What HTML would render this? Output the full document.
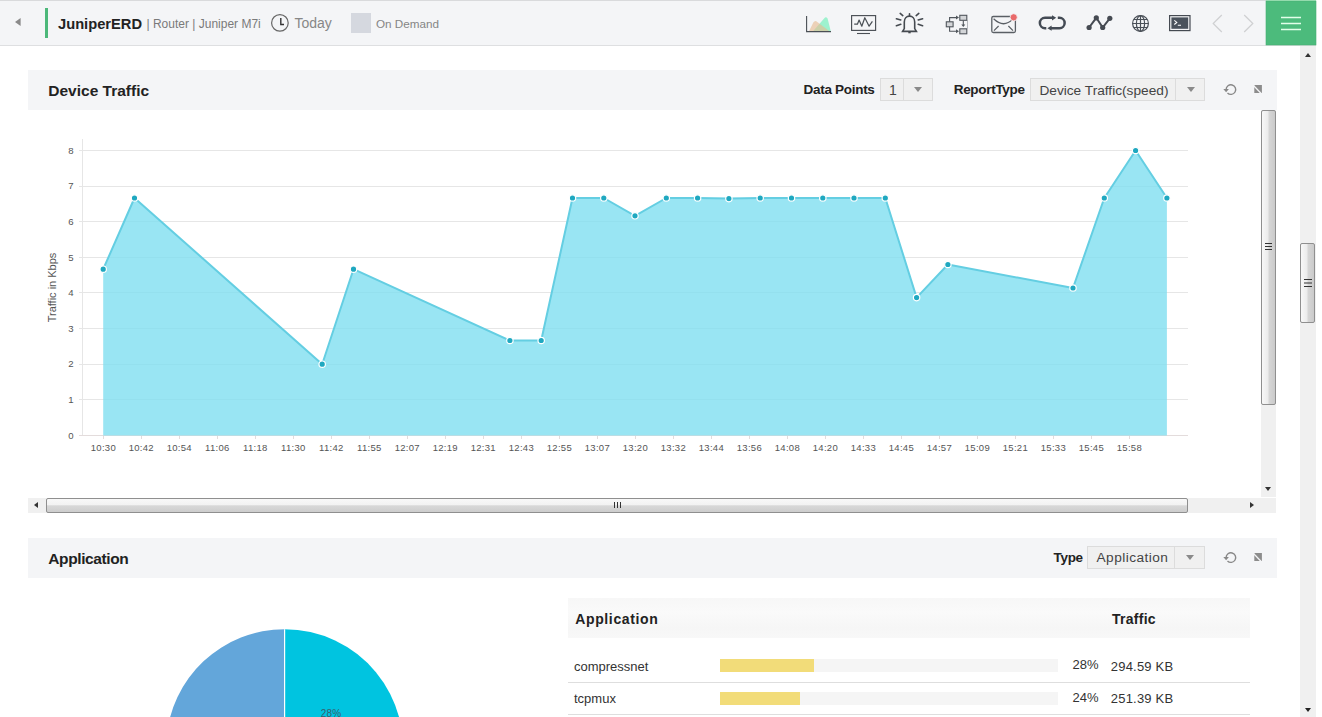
<!DOCTYPE html>
<html><head><meta charset="utf-8">
<style>
*{margin:0;padding:0;box-sizing:border-box}
html,body{width:1322px;height:717px;overflow:hidden;background:#fff;font-family:"Liberation Sans",sans-serif;color:#222}
.a{position:absolute}
.chart{position:absolute;left:0;top:0}
#top{position:absolute;left:0;top:0;width:1316px;height:46px;background:#f4f5f7;border-top:1px solid #d9dadc;border-bottom:1px solid #dedfe1}
.t{position:absolute;white-space:nowrap;line-height:1}
.ph{position:absolute;left:28px;width:1249px;height:40px;background:#f4f5f7}
.sel{position:absolute;height:23px;background:#f0f0f0;border:1px solid #dcdcdc}
.sel .dv{position:absolute;top:0;bottom:0;width:1px;background:#dcdcdc}
.caret{position:absolute;width:0;height:0;border-left:4px solid transparent;border-right:4px solid transparent;border-top:5px solid #8a8a8a}
.sb{position:absolute;background:#f0f0f0}
.thumbv{position:absolute;border:1px solid #8f8f8f;border-radius:2px;background:linear-gradient(90deg,#f8f8f8,#ececec 45%,#d6d6d6 55%,#cacaca)}
.thumbh{position:absolute;border:1px solid #8f8f8f;border-radius:2px;background:linear-gradient(180deg,#f8f8f8,#f2f2f2 45%,#d8d8d8 52%,#cdcdcd)}
</style></head><body>
<div id="top"></div>
<svg class="a" style="left:0;top:0" width="1322" height="50" viewBox="0 0 1322 50">
<polygon points="20.6,18 15,22 20.6,26" fill="#8a8a8a"/>
<rect x="45" y="8" width="3" height="30" fill="#4cb87a"/>
<!-- area chart icon -->
<path d="M813,31.2 L824.3,18.2 Q826,16.2 827.6,18.6 L830.8,31.2 Z" fill="#9ef2cf"/>
<path d="M809,31.2 L813.3,22.6 Q815,20 817.3,21.9 L829.5,31.2 Z" fill="#e6bb92" fill-opacity="0.62"/>
<path d="M806.6,16 V31.6 H831" fill="none" stroke="#4a4f55" stroke-width="1.1"/>
<!-- monitor -->
<rect x="851.6" y="15.6" width="24" height="14.8" fill="none" stroke="#4a4f55" stroke-width="1.15"/>
<path d="M857,33.5 H870" stroke="#4a4f55" stroke-width="1.1"/>
<path d="M854.2,24.2 H857.4 L859.1,20.1 L861.8,26.2 L864.8,17.7 L869.1,26.2 L872.4,21.3" fill="none" stroke="#4a4f55" stroke-width="1.2" stroke-linejoin="round"/>
<!-- bell -->
<g fill="none" stroke="#454a50" stroke-width="1.6" stroke-linecap="round">
<path d="M902.6,31.4 L904.3,28.6 V22 C904.3,18.4 906.5,16.1 909.5,16.1 C912.5,16.1 914.7,18.4 914.7,22 V28.6 L916.4,31.4 Z"/>
<path d="M909.5,13.8 V16"/>
<path d="M900.2,13.4 L902.8,15.6 M896.4,18.7 L900.8,19.9 M896.4,25.7 L900.8,24.3 M918.8,13.4 L916.2,15.6 M922.6,18.7 L918.2,19.9 M922.6,25.7 L918.2,24.3"/>
</g>
<rect x="908.3" y="31.5" width="2.4" height="1.8" fill="#454a50"/>
<!-- workflow -->
<g stroke="#50565c" stroke-width="1.1" fill="#d3d5d8">
<rect x="946.3" y="21.8" width="6.8" height="5"/>
<rect x="959.8" y="15.3" width="7" height="5"/>
<rect x="959.8" y="28.8" width="7" height="5"/>
</g>
<g stroke="#50565c" stroke-width="1.1" fill="none">
<path d="M949.6,21.8 V17.6 H956.5"/>
<path d="M949.6,26.8 V31.2 H956.5"/>
<path d="M963.3,20.6 V25"/>
<path d="M967.5,20 V28.5" stroke="#9a9ea3" stroke-width="0.7"/>
</g>
<g fill="#50565c">
<polygon points="956,15.6 959,17.6 956,19.6"/>
<polygon points="956,29.2 959,31.2 956,33.2"/>
<polygon points="961.3,24.5 965.3,24.5 963.3,27"/>
</g>
<!-- envelope -->
<rect x="991.8" y="16.5" width="23.6" height="16" rx="1.5" fill="none" stroke="#5a5f65" stroke-width="1.3"/>
<path d="M993.6,18.8 Q1003.5,28.5 1012.8,19.2 M994,30.6 L998.6,26 M1013,30.6 L1008.4,26" fill="none" stroke="#5a5f65" stroke-width="1.2"/>
<circle cx="1013.7" cy="17.3" r="3.6" fill="#e96a6a" stroke="#f4f5f7" stroke-width="0.8"/>
<!-- loop -->
<g fill="none" stroke="#444b55" stroke-width="2.5">
<path d="M1046.3,28.15 H1045 A5.15,5.15 0 0 1 1045,17.85 H1052.5"/>
<path d="M1057.8,17.85 H1059.5 A5.15,5.15 0 0 1 1059.5,28.15 H1051"/>
</g>
<g fill="#444b55">
<polygon points="1052,15.3 1056.2,17.85 1052,20.4"/>
<polygon points="1051.6,25.6 1047.4,28.15 1051.6,30.7"/>
</g>
<!-- line chart -->
<polyline points="1089.1,27.5 1096.3,17.8 1102.7,27.5 1109.8,18.3" fill="none" stroke="#454a52" stroke-width="2"/>
<g fill="#454a52"><circle cx="1089.1" cy="27.5" r="2.6"/><circle cx="1096.3" cy="17.8" r="2.6"/><circle cx="1102.7" cy="27.5" r="2.6"/><circle cx="1109.8" cy="18.3" r="2.6"/></g>
<!-- globe -->
<g fill="none" stroke="#4a5058" stroke-width="1.2">
<circle cx="1140.5" cy="23.5" r="7.9"/>
<ellipse cx="1140.5" cy="23.5" rx="4.1" ry="7.9"/>
<path d="M1140.5,15.6 V31.4 M1133.9,19.5 H1147.1 M1132.6,23.5 H1148.4 M1133.9,27.5 H1147.1"/>
</g>
<!-- terminal -->
<rect x="1169.6" y="15.6" width="20.4" height="15" fill="none" stroke="#454a52" stroke-width="1.2"/>
<rect x="1171.4" y="17.4" width="16.8" height="11.4" fill="#4a525c"/>
<path d="M1174.3,20.3 L1176.8,22.4 L1174.3,24.5 M1177.8,25.2 H1181" fill="none" stroke="#fff" stroke-width="1.1"/>
<!-- chevrons -->
<path d="M1221.8,15 L1213.2,23.5 L1221.8,32 M1244.2,15 L1252.8,23.5 L1244.2,32" fill="none" stroke="#cfd0d2" stroke-width="1.2"/>
<rect x="1266" y="0" width="50" height="1" fill="#b6efc6"/><rect x="1266" y="1" width="50" height="44" fill="#4cbb7c"/><rect x="1266" y="1" width="50" height="44" fill="none" stroke="#48ad74" stroke-width="0.6"/>
<path d="M1281,17.5 H1301 M1281,23.5 H1301 M1281,29.5 H1301" stroke="#e2ffe9" stroke-width="1.4"/>
</svg>
<div class="t" style="left:58px;top:16.6px;font-size:14.7px;font-weight:bold;color:#222">JuniperERD</div>
<div class="t" style="left:146.5px;top:17.6px;font-size:12px;color:#7a7a7a">| Router | Juniper M7i</div>
<svg class="a" style="left:270px;top:13px" width="20" height="20" viewBox="0 0 20 20"><circle cx="9.9" cy="9.9" r="8.3" fill="none" stroke="#666" stroke-width="1.2"/><path d="M10.8,5 V11.5 H14" fill="none" stroke="#333" stroke-width="1.4"/></svg>
<div class="t" style="left:294.4px;top:16px;font-size:14px;color:#878787">Today</div>
<div class="a" style="left:351px;top:13px;width:20px;height:20px;background:#d5d8df"></div>
<div class="t" style="left:376px;top:17.8px;font-size:11.7px;color:#858585">On Demand</div>
<svg class="chart" width="1322" height="717" viewBox="0 0 1322 717">
<g stroke="#e6e6e6" stroke-width="1" shape-rendering="crispEdges"><line x1="79" y1="399.5" x2="1188" y2="399.5"/><line x1="79" y1="364.5" x2="1188" y2="364.5"/><line x1="79" y1="328.5" x2="1188" y2="328.5"/><line x1="79" y1="292.5" x2="1188" y2="292.5"/><line x1="79" y1="257.5" x2="1188" y2="257.5"/><line x1="79" y1="221.5" x2="1188" y2="221.5"/><line x1="79" y1="186.5" x2="1188" y2="186.5"/><line x1="79" y1="150.5" x2="1188" y2="150.5"/></g>
<line x1="82.5" y1="139" x2="82.5" y2="436" stroke="#e6e6e6" shape-rendering="crispEdges"/>
<line x1="79" y1="435.5" x2="1188" y2="435.5" stroke="#e3dcdc" shape-rendering="crispEdges"/>
<g stroke="#e3dcdc" shape-rendering="crispEdges"><line x1="103.5" y1="435" x2="103.5" y2="439"/><line x1="141.5" y1="435" x2="141.5" y2="439"/><line x1="179.5" y1="435" x2="179.5" y2="439"/><line x1="217.5" y1="435" x2="217.5" y2="439"/><line x1="255.5" y1="435" x2="255.5" y2="439"/><line x1="293.5" y1="435" x2="293.5" y2="439"/><line x1="331.5" y1="435" x2="331.5" y2="439"/><line x1="369.5" y1="435" x2="369.5" y2="439"/><line x1="407.5" y1="435" x2="407.5" y2="439"/><line x1="445.5" y1="435" x2="445.5" y2="439"/><line x1="483.5" y1="435" x2="483.5" y2="439"/><line x1="521.5" y1="435" x2="521.5" y2="439"/><line x1="559.5" y1="435" x2="559.5" y2="439"/><line x1="597.5" y1="435" x2="597.5" y2="439"/><line x1="635.5" y1="435" x2="635.5" y2="439"/><line x1="673.5" y1="435" x2="673.5" y2="439"/><line x1="711.5" y1="435" x2="711.5" y2="439"/><line x1="749.5" y1="435" x2="749.5" y2="439"/><line x1="787.5" y1="435" x2="787.5" y2="439"/><line x1="825.5" y1="435" x2="825.5" y2="439"/><line x1="863.5" y1="435" x2="863.5" y2="439"/><line x1="901.5" y1="435" x2="901.5" y2="439"/><line x1="939.5" y1="435" x2="939.5" y2="439"/><line x1="977.5" y1="435" x2="977.5" y2="439"/><line x1="1015.5" y1="435" x2="1015.5" y2="439"/><line x1="1053.5" y1="435" x2="1053.5" y2="439"/><line x1="1091.5" y1="435" x2="1091.5" y2="439"/><line x1="1129.5" y1="435" x2="1129.5" y2="439"/></g>
<polygon points="103.2,435.5 103.2,269.2 134.5,198.0 322.2,364.2 353.5,269.2 509.9,340.5 541.2,340.5 572.5,198.0 603.8,198.0 635.0,215.8 666.3,198.0 697.6,198.0 728.9,198.6 760.2,198.0 791.5,198.0 822.8,198.0 854.0,198.0 885.3,198.0 916.6,297.6 947.9,264.5 1073.0,288.0 1104.3,198.0 1135.6,150.5 1166.9,198.0 1166.9,435.5" fill="#7fdff0" fill-opacity="0.8"/>
<polyline points="103.2,269.2 134.5,198.0 322.2,364.2 353.5,269.2 509.9,340.5 541.2,340.5 572.5,198.0 603.8,198.0 635.0,215.8 666.3,198.0 697.6,198.0 728.9,198.6 760.2,198.0 791.5,198.0 822.8,198.0 854.0,198.0 885.3,198.0 916.6,297.6 947.9,264.5 1073.0,288.0 1104.3,198.0 1135.6,150.5 1166.9,198.0" fill="none" stroke="#64cee2" stroke-width="2" stroke-linejoin="round"/>
<g fill="#1fa8c0" stroke="#fff" stroke-width="1.2"><circle cx="103.2" cy="269.2" r="3.2"/><circle cx="134.5" cy="198.0" r="3.2"/><circle cx="322.2" cy="364.2" r="3.2"/><circle cx="353.5" cy="269.2" r="3.2"/><circle cx="509.9" cy="340.5" r="3.2"/><circle cx="541.2" cy="340.5" r="3.2"/><circle cx="572.5" cy="198.0" r="3.2"/><circle cx="603.8" cy="198.0" r="3.2"/><circle cx="635.0" cy="215.8" r="3.2"/><circle cx="666.3" cy="198.0" r="3.2"/><circle cx="697.6" cy="198.0" r="3.2"/><circle cx="728.9" cy="198.6" r="3.2"/><circle cx="760.2" cy="198.0" r="3.2"/><circle cx="791.5" cy="198.0" r="3.2"/><circle cx="822.8" cy="198.0" r="3.2"/><circle cx="854.0" cy="198.0" r="3.2"/><circle cx="885.3" cy="198.0" r="3.2"/><circle cx="916.6" cy="297.6" r="3.2"/><circle cx="947.9" cy="264.5" r="3.2"/><circle cx="1073.0" cy="288.0" r="3.2"/><circle cx="1104.3" cy="198.0" r="3.2"/><circle cx="1135.6" cy="150.5" r="3.2"/><circle cx="1166.9" cy="198.0" r="3.2"/></g>
<g font-family="Liberation Sans" font-size="9.6" fill="#555" text-anchor="end"><text x="73.6" y="438.7">0</text><text x="73.6" y="403.1">1</text><text x="73.6" y="367.4">2</text><text x="73.6" y="331.8">3</text><text x="73.6" y="296.2">4</text><text x="73.6" y="260.6">5</text><text x="73.6" y="224.9">6</text><text x="73.6" y="189.3">7</text><text x="73.6" y="153.7">8</text></g>
<g font-family="Liberation Sans" font-size="9.5" letter-spacing="0.3" fill="#555" text-anchor="middle"><text x="103.4" y="451">10:30</text><text x="141.3" y="451">10:42</text><text x="179.3" y="451">10:54</text><text x="217.3" y="451">11:06</text><text x="255.3" y="451">11:18</text><text x="293.3" y="451">11:30</text><text x="331.3" y="451">11:42</text><text x="369.3" y="451">11:55</text><text x="407.3" y="451">12:07</text><text x="445.3" y="451">12:19</text><text x="483.3" y="451">12:31</text><text x="521.4" y="451">12:43</text><text x="559.4" y="451">12:55</text><text x="597.4" y="451">13:07</text><text x="635.4" y="451">13:20</text><text x="673.4" y="451">13:32</text><text x="711.4" y="451">13:44</text><text x="749.4" y="451">13:56</text><text x="787.4" y="451">14:08</text><text x="825.4" y="451">14:20</text><text x="863.4" y="451">14:33</text><text x="901.4" y="451">14:45</text><text x="939.4" y="451">14:57</text><text x="977.4" y="451">15:09</text><text x="1015.4" y="451">15:21</text><text x="1053.4" y="451">15:33</text><text x="1091.4" y="451">15:45</text><text x="1129.4" y="451">15:58</text></g>
<text transform="translate(55.6,287.5) rotate(-90)" text-anchor="middle" font-family="Liberation Sans" font-size="11" fill="#555">Traffic in Kbps</text>
</svg><!-- page scrollbar -->
<div class="sb" style="left:1300px;top:46px;width:16px;height:671px;background:#f0f0f0"></div>
<div class="a" style="left:1304.5px;top:53px;width:0;height:0;border-left:3.5px solid transparent;border-right:3.5px solid transparent;border-bottom:4px solid #333"></div>
<div class="thumbv" style="left:1300px;top:243px;width:15px;height:80px"></div>
<div class="a" style="left:1304px;top:278.5px;width:7.5px;height:1px;background:#333;box-shadow:0 3.5px 0 #333,0 7px 0 #333"></div>
<div class="a" style="left:1304.5px;top:707.6px;width:0;height:0;border-left:3.7px solid transparent;border-right:3.7px solid transparent;border-top:4.2px solid #222"></div>

<!-- panel 1 header -->
<div class="ph" style="top:70px"></div>
<div class="t" style="left:48.3px;top:82.7px;font-size:15.5px;font-weight:bold;color:#222">Device Traffic</div>
<div class="t" style="left:803.6px;top:82.5px;font-size:13.5px;font-weight:bold;letter-spacing:-0.3px;color:#222">Data Points</div>
<div class="sel" style="left:880px;top:78px;width:53px;height:23px"><div class="dv" style="left:22px"></div><div class="caret" style="left:33px;top:8px"></div></div>
<div class="t" style="left:889px;top:83px;font-size:14px;color:#444">1</div>
<div class="t" style="left:953.7px;top:82.5px;font-size:13.5px;font-weight:bold;letter-spacing:-0.3px;color:#222">ReportType</div>
<div class="sel" style="left:1030px;top:78px;width:175px;height:23px"><div class="dv" style="left:144px"></div><div class="caret" style="left:156px;top:8px"></div></div>
<div class="t" style="left:1039.4px;top:83.5px;font-size:13.7px;color:#444">Device Traffic(speed)</div>
<svg class="a" style="left:1222px;top:82px" width="16" height="16" viewBox="0 0 16 16"><path d="M4.1,7.6 A4.8,4.8 0 1 1 5.5,11" fill="none" stroke="#888" stroke-width="1.4"/><polygon points="1.3,7 6.9,7 4.1,10.2" fill="#888"/></svg>
<svg class="a" style="left:1254px;top:85px" width="9" height="9" viewBox="0 0 9 9"><rect x="0.3" y="0" width="7.6" height="8" fill="#8c8c8c"/><path d="M-0.5,0.6 L7.6,8.9" stroke="#f4f5f7" stroke-width="1.4"/></svg>

<!-- inner v scrollbar -->
<div class="sb" style="left:1261px;top:110px;width:15px;height:387px"></div>
<div class="thumbv" style="left:1261px;top:110px;width:15px;height:295px"></div>
<div class="a" style="left:1265px;top:243px;width:6.5px;height:1px;background:#333;box-shadow:0 3px 0 #333,0 6px 0 #333"></div>
<div class="a" style="left:1265px;top:487px;width:0;height:0;border-left:3.5px solid transparent;border-right:3.5px solid transparent;border-top:4px solid #333"></div>
<!-- h scrollbar -->
<div class="sb" style="left:28px;top:498px;width:1248px;height:15px"></div>
<div class="a" style="left:34px;top:502px;width:0;height:0;border-top:3.5px solid transparent;border-bottom:3.5px solid transparent;border-right:4px solid #333"></div>
<div class="thumbh" style="left:46px;top:498px;width:1142px;height:15px"></div>
<div class="a" style="left:613.5px;top:502px;width:1px;height:6px;background:#333;box-shadow:3px 0 0 #333,6px 0 0 #333"></div>
<div class="a" style="left:1250px;top:502px;width:0;height:0;border-top:3.5px solid transparent;border-bottom:3.5px solid transparent;border-left:4px solid #333"></div>

<!-- panel 2 header -->
<div class="ph" style="top:538px"></div>
<div class="t" style="left:48.3px;top:550.8px;font-size:15.5px;font-weight:bold;letter-spacing:-0.4px;color:#222">Application</div>
<div class="t" style="left:1053.5px;top:550.5px;font-size:13.5px;font-weight:bold;letter-spacing:-0.3px;color:#222">Type</div>
<div class="sel" style="left:1087px;top:546px;width:118px;height:23px"><div class="dv" style="left:86px"></div><div class="caret" style="left:98px;top:8px"></div></div>
<div class="t" style="left:1096.5px;top:551px;font-size:13.7px;letter-spacing:0.45px;color:#444">Application</div>
<svg class="a" style="left:1222px;top:550px" width="16" height="16" viewBox="0 0 16 16"><path d="M4.1,7.6 A4.8,4.8 0 1 1 5.5,11" fill="none" stroke="#888" stroke-width="1.4"/><polygon points="1.3,7 6.9,7 4.1,10.2" fill="#888"/></svg>
<svg class="a" style="left:1254px;top:553px" width="9" height="9" viewBox="0 0 9 9"><rect x="0.3" y="0" width="7.6" height="8" fill="#8c8c8c"/><path d="M-0.5,0.6 L7.6,8.9" stroke="#f4f5f7" stroke-width="1.4"/></svg>

<!-- pie -->
<svg class="a" style="left:0;top:578px" width="560" height="139" viewBox="0 578 560 139">
<path d="M284.6,747.7 L284.6,629.2 A118.5,118.5 0 0 1 401.0,769.9 Z" fill="#00c4e0"/>
<path d="M284.6,747.7 L401.0,769.9 A118.5,118.5 0 1 1 284.6,629.2 Z" fill="#63a6da"/>
<line x1="284.6" y1="629.2" x2="284.6" y2="747.7" stroke="#fff" stroke-width="1.2"/>
<text x="331" y="716.5" font-family="Liberation Sans" font-size="10" letter-spacing="0.2" fill="#36606e" text-anchor="middle">28%</text>
</svg>
<!-- table -->
<div class="a" style="left:568px;top:598px;width:682px;height:40px;background:linear-gradient(#f7f7f7,#fafafa 35%,#f6f6f6 75%,#f8f8f8)"></div>
<div class="t" style="left:575.2px;top:612.2px;font-size:14px;font-weight:bold;letter-spacing:0.64px;color:#222">Application</div>
<div class="t" style="left:1112px;top:612.2px;font-size:14px;font-weight:bold;letter-spacing:0.27px;color:#222">Traffic</div>
<div class="t" style="left:574px;top:659.5px;font-size:13px;color:#333">compressnet</div>
<div class="a" style="left:720px;top:659px;width:338px;height:13px;background:#f5f5f5"></div>
<div class="a" style="left:720px;top:659px;width:94.3px;height:13px;background:#f2dc79"></div>
<div class="t" style="left:1072.5px;top:657.7px;font-size:13px;color:#333">28%</div>
<div class="t" style="left:1110.8px;top:659.8px;font-size:13px;letter-spacing:0.2px;color:#333">294.59 KB</div>
<div class="a" style="left:568px;top:682px;width:682px;height:1px;background:#dedede"></div>
<div class="t" style="left:574px;top:691.5px;font-size:13px;color:#333">tcpmux</div>
<div class="a" style="left:720px;top:692px;width:338px;height:13px;background:#f5f5f5"></div>
<div class="a" style="left:720px;top:692px;width:80.3px;height:13px;background:#f2dc79"></div>
<div class="t" style="left:1072.5px;top:691.2px;font-size:13px;color:#333">24%</div>
<div class="t" style="left:1110.8px;top:691.6px;font-size:13px;letter-spacing:0.2px;color:#333">251.39 KB</div>
<div class="a" style="left:568px;top:714px;width:682px;height:1px;background:#dedede"></div>
</body></html>
